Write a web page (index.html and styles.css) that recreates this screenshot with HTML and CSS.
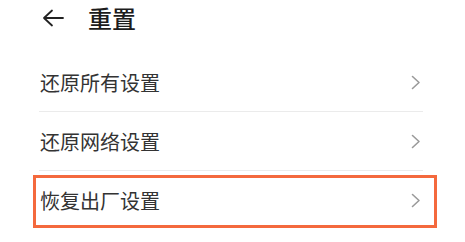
FILE: index.html
```html
<!DOCTYPE html>
<html lang="zh-CN">
<head>
<meta charset="utf-8">
<link rel="stylesheet" href="styles.css">
</head>
<body>
<div class="page">
  <header class="header">
    <svg class="back" width="22" height="18" viewBox="0 0 22 18">
      <path d="M10 1.5 L2 9 L10 16.5 M2 9 H21" fill="none" stroke="#222" stroke-width="1.8" stroke-linecap="round" stroke-linejoin="round"/>
    </svg>
    <h1 class="title">重置</h1>
  </header>
  <ul class="list">
    <li class="row"><span class="label">还原所有设置</span><svg class="chev" width="10" height="15" viewBox="0 0 10 15"><path d="M1.5 1.5 L8 7.5 L1.5 13.5" fill="none" stroke="#9a9a9a" stroke-width="1.6" stroke-linecap="round" stroke-linejoin="round"/></svg></li>
    <li class="row"><span class="label">还原网络设置</span><svg class="chev" width="10" height="15" viewBox="0 0 10 15"><path d="M1.5 1.5 L8 7.5 L1.5 13.5" fill="none" stroke="#9a9a9a" stroke-width="1.6" stroke-linecap="round" stroke-linejoin="round"/></svg></li>
    <li class="row row-last"><span class="label">恢复出厂设置</span><svg class="chev" width="10" height="15" viewBox="0 0 10 15"><path d="M1.5 1.5 L8 7.5 L1.5 13.5" fill="none" stroke="#9a9a9a" stroke-width="1.6" stroke-linecap="round" stroke-linejoin="round"/></svg><span class="highlight"></span></li>
  </ul>
</div>
</body>
</html>
```
FILE: styles.css
```css
html, body {
  margin: 0;
  padding: 0;
  background: #ffffff;
}
body {
  font-family: "Noto Sans CJK SC", "Noto Sans", sans-serif;
  width: 465px;
  height: 242px;
  overflow: hidden;
}
.page {
  display: flex;
  flex-direction: column;
}
.header {
  display: flex;
  align-items: center;
  height: 36px;
  padding-left: 42px;
}
.back {
  display: block;
  margin-right: 24px;
}
.title {
  margin: 0;
  font-size: 24px;
  font-weight: 500;
  color: #1c1c1c;
  line-height: 36px;
}
.list {
  list-style: none;
  margin: 17px 0 0 39px;
  padding: 0;
  width: 384px;
}
.row {
  position: relative;
  display: flex;
  align-items: center;
  justify-content: space-between;
  height: 58px;
  border-bottom: 1px solid #ebebeb;
}
.row-last {
  border-bottom: none;
}
.label {
  font-size: 20px;
  color: #333333;
  padding-left: 1px;
}
.chev {
  display: block;
  margin-right: 2px;
}
.highlight {
  position: absolute;
  left: -6px;
  right: -14px;
  top: 4px;
  height: 53px;
  box-sizing: border-box;
  border: 3px solid #f4693d;
}
```
